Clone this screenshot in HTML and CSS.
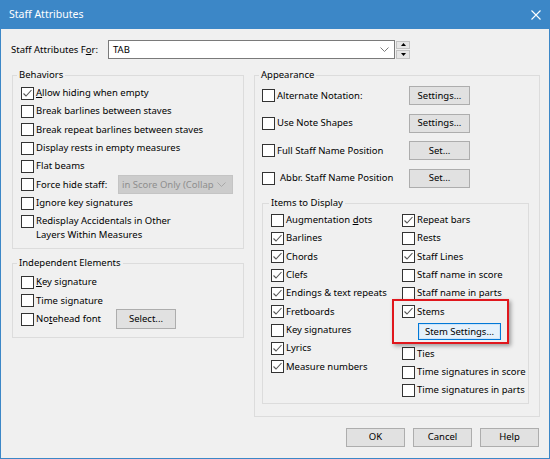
FILE: index.html
```html
<!DOCTYPE html>
<html>
<head>
<meta charset="utf-8">
<link rel="stylesheet" href="styles.css">
</head>
<body>
<div class="window">
  <div class="titlebar">
    <span class="title">Staff Attributes</span>
    <svg class="close" width="10" height="10" viewBox="0 0 10 10"><path d="M0.5 0.5 L9.5 9.5 M9.5 0.5 L0.5 9.5" stroke="#fff" stroke-width="1.1" fill="none"/></svg>
  </div>
  <div class="content">
    <div class="for-row">
      <span class="for-label">Staff Attributes F<u>o</u>r:</span>
      <div class="combo">
        <span class="combo-text">TAB</span>
        <svg width="9" height="5" viewBox="0 0 9 5"><path d="M0.5 0.5 L4.5 4.5 L8.5 0.5" stroke="#7a7a7a" fill="none"/></svg>
      </div>
      <div class="spin">
        <div class="spin-btn"><svg width="5" height="3" viewBox="0 0 5 3"><path d="M0 3 L2.5 0 L5 3 Z" fill="#000"/></svg></div>
        <div class="spin-btn"><svg width="5" height="3" viewBox="0 0 5 3"><path d="M0 0 L5 0 L2.5 3 Z" fill="#000"/></svg></div>
      </div>
    </div>

    <div class="columns">
      <div class="col-left">
        <fieldset class="group">
          <legend>Behaviors</legend>
          <div class="body behaviors-body">
            <div class="row"><span class="cb checked"><svg width="11" height="11" viewBox="0 0 11 11"><path d="M1.5 5.5 L4 8 L9.5 2" stroke="#555" stroke-width="1.1" fill="none"/></svg></span><span><u>A</u>llow hiding when empty</span></div>
            <div class="row"><span class="cb"></span><span>Break barlines between staves</span></div>
            <div class="row"><span class="cb"></span><span>Break repeat barlines between staves</span></div>
            <div class="row"><span class="cb"></span><span>Display rests in empty measures</span></div>
            <div class="row"><span class="cb"></span><span>Flat beams</span></div>
            <div class="row"><span class="cb"></span><span class="lbl-force">Force hide staff:</span>
              <div class="dropdown-disabled"><span class="dd-text">in Score Only (Collap</span><svg width="9" height="5" viewBox="0 0 9 5"><path d="M0.5 0.5 L4.5 4.5 L8.5 0.5" stroke="#a8a8a8" fill="none"/></svg></div>
            </div>
            <div class="row"><span class="cb"></span><span>Ignore key signatures</span></div>
            <div class="row multi"><span class="cb"></span><span class="multi-text">Redisplay Accidentals in Other<br>Layers Within Measures</span></div>
          </div>
        </fieldset>

        <fieldset class="group independent">
          <legend>Independent Elements</legend>
          <div class="body independent-body">
            <div class="row"><span class="cb"></span><span><u>K</u>ey signature</span></div>
            <div class="row"><span class="cb"></span><span>Time signature</span></div>
            <div class="row"><span class="cb"></span><span class="lbl-notehead">No<u>t</u>ehead font</span><button class="btn btn-select">Select...</button></div>
          </div>
        </fieldset>
      </div>

      <div class="col-right">
        <fieldset class="group">
          <legend>Appearance</legend>
          <div class="body appearance-body">
            <div class="app-grid">
              <div class="app-cell"><span class="cb"></span><span>Alternate Notation:</span></div>
              <button class="btn btn-app">Settings...</button>
              <div class="app-cell"><span class="cb"></span><span>Use Note Shapes</span></div>
              <button class="btn btn-app">Settings...</button>
              <div class="app-cell"><span class="cb"></span><span>Full Staff Name Position</span></div>
              <button class="btn btn-app">Set...</button>
              <div class="app-cell"><span class="cb"></span><span class="abbr">Abbr. Staff Name Position</span></div>
              <button class="btn btn-app">Set...</button>
            </div>

            <fieldset class="group items">
              <legend>Items to Display</legend>
              <div class="body items-body">
                <div class="items-col">
                  <div class="row"><span class="cb"></span><span>Augmentation <u>d</u>ots</span></div>
                  <div class="row"><span class="cb checked"><svg width="11" height="11" viewBox="0 0 11 11"><path d="M1.5 5.5 L4 8 L9.5 2" stroke="#555" stroke-width="1.1" fill="none"/></svg></span><span>Barlines</span></div>
                  <div class="row"><span class="cb checked"><svg width="11" height="11" viewBox="0 0 11 11"><path d="M1.5 5.5 L4 8 L9.5 2" stroke="#555" stroke-width="1.1" fill="none"/></svg></span><span>Chords</span></div>
                  <div class="row"><span class="cb checked"><svg width="11" height="11" viewBox="0 0 11 11"><path d="M1.5 5.5 L4 8 L9.5 2" stroke="#555" stroke-width="1.1" fill="none"/></svg></span><span>Clefs</span></div>
                  <div class="row"><span class="cb checked"><svg width="11" height="11" viewBox="0 0 11 11"><path d="M1.5 5.5 L4 8 L9.5 2" stroke="#555" stroke-width="1.1" fill="none"/></svg></span><span>Endings &amp; text repeats</span></div>
                  <div class="row"><span class="cb checked"><svg width="11" height="11" viewBox="0 0 11 11"><path d="M1.5 5.5 L4 8 L9.5 2" stroke="#555" stroke-width="1.1" fill="none"/></svg></span><span>Fretboards</span></div>
                  <div class="row"><span class="cb"></span><span>Key signatures</span></div>
                  <div class="row"><span class="cb checked"><svg width="11" height="11" viewBox="0 0 11 11"><path d="M1.5 5.5 L4 8 L9.5 2" stroke="#555" stroke-width="1.1" fill="none"/></svg></span><span>Lyrics</span></div>
                  <div class="row"><span class="cb checked"><svg width="11" height="11" viewBox="0 0 11 11"><path d="M1.5 5.5 L4 8 L9.5 2" stroke="#555" stroke-width="1.1" fill="none"/></svg></span><span>Measure numbers</span></div>
                </div>
                <div class="items-col right">
                  <div class="row"><span class="cb checked"><svg width="11" height="11" viewBox="0 0 11 11"><path d="M1.5 5.5 L4 8 L9.5 2" stroke="#555" stroke-width="1.1" fill="none"/></svg></span><span>Repeat bars</span></div>
                  <div class="row"><span class="cb"></span><span>Rests</span></div>
                  <div class="row"><span class="cb checked"><svg width="11" height="11" viewBox="0 0 11 11"><path d="M1.5 5.5 L4 8 L9.5 2" stroke="#555" stroke-width="1.1" fill="none"/></svg></span><span>Staff Lines</span></div>
                  <div class="row"><span class="cb"></span><span>Staff name in score</span></div>
                  <div class="row"><span class="cb"></span><span>Staff name in parts</span></div>
                  <div class="row"><span class="cb checked"><svg width="11" height="11" viewBox="0 0 11 11"><path d="M1.5 5.5 L4 8 L9.5 2" stroke="#555" stroke-width="1.1" fill="none"/></svg></span><span>Stems</span></div>
                  <div class="stem-row"><button class="btn btn-stem">Stem Settings...</button></div>
                  <div class="row"><span class="cb"></span><span>Ties</span></div>
                  <div class="row"><span class="cb"></span><span>Time signatures in score</span></div>
                  <div class="row"><span class="cb"></span><span>Time signatures in parts</span></div>
                  <div class="highlight"></div>
                </div>
              </div>
            </fieldset>
          </div>
        </fieldset>
      </div>
    </div>

    <div class="buttons">
      <button class="btn btn-main">OK</button>
      <button class="btn btn-main">Cancel</button>
      <button class="btn btn-main">Help</button>
    </div>
  </div>
</div>
</body>
</html>
```

FILE: styles.css
```css
body {
  margin: 0;
  font-family: "Noto Sans", "Open Sans", sans-serif;
  font-size: 9.5px;
  color: #000;
  background: #fff;
}

u { text-decoration-thickness: 1px; text-underline-offset: 1px; }

.window {
  width: 550px;
  height: 459px;
  box-sizing: border-box;
  border: 1px solid #3c87c7;
  border-top: 0;
  background: #f0f0f0;
  display: flex;
  flex-direction: column;
}

.titlebar {
  height: 29px;
  flex: none;
  background: #3c87c7;
  color: #fff;
  display: flex;
  align-items: center;
  justify-content: space-between;
  padding: 0 8px;
  font-size: 10.5px;
}
.title { margin-top: -1px; }
.close { display: block; margin-top: 1px; }

.content {
  padding: 11px 10px 0 11px;
  display: flex;
  flex-direction: column;
}

.for-row {
  display: flex;
  align-items: center;
  height: 19px;
}
.for-label {
  width: 97px;
  margin-left: -1px;
  flex: none;
}
.combo {
  width: 287px;
  height: 19px;
  box-sizing: border-box;
  border: 1px solid #7a7a7a;
  background: #fff;
  display: flex;
  align-items: center;
  justify-content: space-between;
  padding: 0 5px 0 4px;
}
.combo-text { line-height: 14px; }
.combo svg { display: block; }
.spin {
  margin-left: 1px;
  width: 14px;
  height: 18px;
  display: flex;
  flex-direction: column;
  gap: 1px;
}
.spin-btn {
  flex: 1;
  box-sizing: border-box;
  border: 1px solid #c2c2c2;
  background: #e6e6e6;
  display: flex;
  align-items: center;
  justify-content: center;
}
.spin-btn svg { display: block; }

.columns {
  display: flex;
  gap: 10px;
  margin-top: 9px;
}
.col-left { width: 232px; flex: none; }
.col-right { width: 286px; flex: none; }

fieldset.group {
  margin: 0;
  padding: 0;
  border: 1px solid #dcdcdc;
  min-width: 0;
}
fieldset.group > legend {
  padding: 0 2px;
  margin-left: 4px;
  line-height: 14px;
}

.row {
  display: flex;
  align-items: center;
  height: 18.33px;
  white-space: nowrap;
  line-height: 14px;
}
.cb {
  width: 13px;
  height: 13px;
  box-sizing: border-box;
  border: 1px solid #333;
  background: #fff;
  flex: none;
  margin-right: 2px;
  display: flex;
}
.cb svg { display: block; }

.behaviors-body { padding: 2px 0 6px 8px; }
.row.multi {
  height: auto;
  align-items: flex-start;
  padding-top: 2px;
}
.row.multi .cb { margin-top: 1px; }
.lbl-force { width: 82px; flex: none; }
.dropdown-disabled {
  width: 115px;
  height: 19px;
  box-sizing: border-box;
  border: 1px solid #c4c4c4;
  background: #cccccc;
  color: #8e8e8e;
  display: flex;
  align-items: center;
  justify-content: space-between;
  padding: 0 6px 0 3px;
}
.dd-text { white-space: nowrap; }
.dropdown-disabled svg { display: block; flex: none; }

fieldset.group.independent { margin-top: 7px; }
.independent-body { padding: 3px 0 9px 8px; }
.lbl-notehead { width: 80px; flex: none; }

.btn {
  font-family: inherit;
  font-size: 9.5px;
  color: #000;
  background: #e1e1e1;
  border: 1px solid #adadad;
  border-radius: 0;
  padding: 0;
  margin: 0;
  box-sizing: border-box;
  line-height: 14px;
}
.btn-select { width: 60px; height: 20px; }

.appearance-body { padding: 0 10px 12px 7px; }
.app-grid {
  display: grid;
  grid-template-columns: 147px 61px;
  grid-auto-rows: 27.5px;
  align-items: center;
}
.app-cell { display: flex; align-items: center; white-space: nowrap; line-height: 14px; }
.abbr { margin-left: 3px; }
.btn-app { height: 19px; width: 61px; }

fieldset.group.items { margin-top: 4px; }
fieldset.group.items > legend { margin-left: 6px; }
.items-body {
  padding: 1px 0 3px 8px;
  display: grid;
  grid-template-columns: 131px 1fr;
}
.items-col { display: flex; flex-direction: column; }
.items-col.right { position: relative; }
.stem-row {
  height: 23.67px;
  box-sizing: border-box;
  padding: 2px 0 0 16px;
}
.btn-stem {
  width: 83px;
  height: 17px;
  border: 1px solid #0078d7;
  box-shadow: inset 0 0 0 1px #cfe4f7;
  background: #e5f1fb;
  line-height: 13px;
  display: block;
}
.highlight {
  position: absolute;
  left: -10px;
  top: 88px;
  width: 117px;
  height: 45px;
  box-sizing: border-box;
  border: 2px solid #e0171d;
  box-shadow: 2px 2px 4px rgba(0, 0, 0, 0.35);
}

.buttons {
  display: flex;
  justify-content: flex-end;
  gap: 8px;
  margin-top: 11px;
}
.btn-main { width: 59px; height: 19px; }
```
